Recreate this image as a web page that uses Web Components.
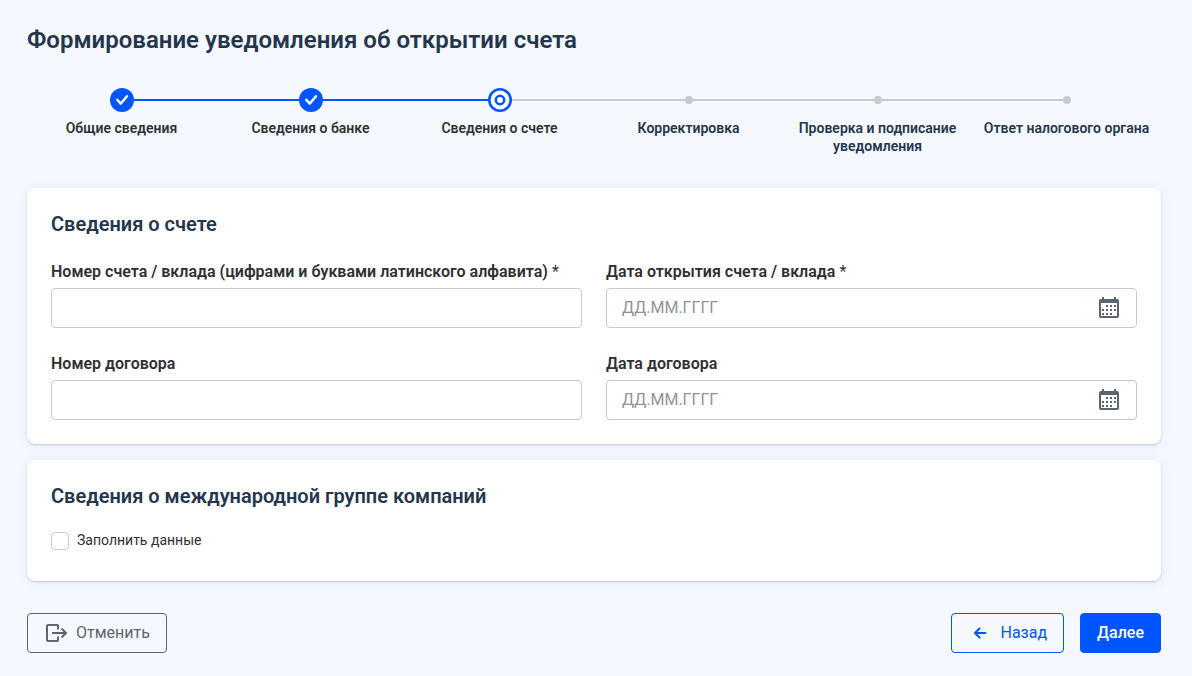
<!DOCTYPE html>
<html lang="ru">
<head>
<meta charset="utf-8">
<meta name="viewport" content="width=device-width, initial-scale=1">
<title>Формирование уведомления об открытии счета</title>
<style>
  body {
    margin: 0;
    background: #f5f8ff;
    color: #2f3033;
    font-family: Roboto, "Noto Sans", sans-serif;
    font-size: 16px;
    line-height: 24px;
    --blue: #0055ff;
    --navy: #25364b;
    --slate: #5f6270;
    --line: #c8c9cc;
  }
</style>
</head>
<body>
<notice-page>
  <step-list slot="steps">
    <step-item state="done">Общие сведения</step-item>
    <step-item state="done">Сведения о банке</step-item>
    <step-item state="current">Сведения о счете</step-item>
    <step-item>Корректировка</step-item>
    <step-item>Проверка и подписание уведомления</step-item>
    <step-item last>Ответ налогового органа</step-item>
  </step-list>
  <form-card heading="Сведения о счете">
    <field-grid>
      <text-field label="Номер счета / вклада (цифрами и буквами латинского алфавита)" required></text-field>
      <date-field label="Дата открытия счета / вклада" required></date-field>
      <text-field label="Номер договора"></text-field>
      <date-field label="Дата договора"></date-field>
    </field-grid>
  </form-card>
  <form-card heading="Сведения о международной группе компаний">
    <check-field>Заполнить данные</check-field>
  </form-card>
  <action-bar slot="actions">
    <action-button kind="cancel" icon="exit" slot="start">Отменить</action-button>
    <action-button kind="back" icon="arrow">Назад</action-button>
    <action-button kind="next">Далее</action-button>
  </action-bar>
</notice-page>

<script>
  const define = (name, render) => customElements.define(name, class extends HTMLElement {
    connectedCallback() {
      if (this.shadowRoot) return;
      const template = document.createElement('template');
      template.innerHTML = render(this);
      this.attachShadow({ mode: 'open' }).append(template.content.cloneNode(true));
    }
  });

  define('notice-page', () => `
    <style>
      :host { display: block; padding: 24px 31px 23px 27px; }
      h1 { margin: 0 0 32px; color: var(--navy); font-size: 24px; line-height: 32px; font-weight: 600; }
      .cards { display: grid; gap: 16px; margin: 32px 0; }
    </style>
    <main>
      <h1>Формирование уведомления об открытии счета</h1>
      <slot name="steps"></slot>
      <div class="cards"><slot></slot></div>
      <slot name="actions"></slot>
    </main>`);

  define('step-list', () => `
    <style>
      :host { display: grid; grid-auto-flow: column; grid-auto-columns: minmax(0, 1fr); }
    </style>
    <slot></slot>`);

  const marks = {
    done: `<svg width="24" height="24" viewBox="0 0 24 24" aria-hidden="true"><circle cx="12" cy="12" r="12" fill="#05f"/><path d="M7.200 11.800l3.500 3.800 6.300-7.400" fill="none" stroke="#fff" stroke-width="2.400" stroke-linecap="round" stroke-linejoin="round"/></svg>`,
    current: `<svg width="24" height="24" viewBox="0 0 24 24" aria-hidden="true"><circle cx="12" cy="12" r="10.700" fill="#fff" stroke="#05f" stroke-width="2.600"/><circle cx="12" cy="12" r="4.200" fill="#fff" stroke="#05f" stroke-width="2.500"/></svg>`,
    todo: `<svg width="8" height="8" viewBox="0 0 8 8" aria-hidden="true"><circle cx="4" cy="4" r="4" fill="#c8c9cc"/></svg>`
  };

  define('step-item', el => `
    <style>
      :host { display: block; text-align: center; font-size: 14px; line-height: 18px; font-weight: 600; }
      .track { display: grid; grid-template-columns: 1fr auto 1fr; align-items: center; height: 24px; margin-bottom: 7px; }
      .track::before, .track::after { content: ""; height: 2px; background: var(--line); }
      svg { display: block; }
      :host(:first-child) .track::before, :host([last]) .track::after { background: none; }
      :host([state]) .track::before, :host([state="done"]) .track::after { background: var(--blue); }
      :host([state]:first-child) .track::before { background: none; }
      :host(:not([state])) { color: var(--navy); }
      .label { padding: 0 8px 1px; min-height: 36px; }
    </style>
    <div class="track">${marks[el.getAttribute('state') || 'todo']}</div>
    <div class="label"><slot></slot></div>`);

  define('form-card', el => `
    <style>
      :host { display: block; padding: 24px; border-radius: 8px; background: #fff;
        box-shadow: 0 1px 2px rgba(34, 40, 60, .2), 0 2px 12px rgba(60, 90, 170, .08); }
      h2 { margin: 0 0 24px; color: var(--navy); font-size: 20px; line-height: 24px; font-weight: 600; }
    </style>
    <h2>${el.getAttribute('heading')}</h2>
    <slot></slot>`);

  define('field-grid', () => `
    <style>
      :host { display: grid; grid-template-columns: repeat(auto-fit, minmax(min(100%, 360px), 1fr)); gap: 24px; }
    </style>
    <slot></slot>`);

  const fieldStyle = `
    :host { display: block; }
    label { display: block; margin-bottom: 4px; font-weight: 600; line-height: 24px; }
    .mark { font-weight: 400; }
    .box { display: flex; align-items: center; box-sizing: border-box; height: 40px;
      border: 1px solid var(--line); border-radius: 4px; background: #fff; }
    .box:focus-within { border-color: var(--blue); }
    input { flex: 1; min-width: 0; height: 100%; box-sizing: border-box; margin: 0; padding: 0 15px 2px;
      border: 0; outline: 0; background: none; color: inherit; font: inherit; }
    input::placeholder { color: #8f929a; opacity: 1; }`;

  const fieldLabel = el =>
    `<label for="value">${el.getAttribute('label')}${el.hasAttribute('required') ? ' <span class="mark">*</span>' : ''}</label>`;

  define('text-field', el => `
    <style>${fieldStyle}</style>
    ${fieldLabel(el)}
    <div class="box"><input id="value" type="text"></div>`);

  define('date-field', el => `
    <style>${fieldStyle}
      button { display: block; margin: 0 15px 0 0; padding: 0; border: 0; background: none; color: var(--slate); cursor: pointer; }
      svg { display: block; }
    </style>
    ${fieldLabel(el)}
    <div class="box">
      <input id="value" type="text" placeholder="ДД.ММ.ГГГГ">
      <button type="button" aria-label="Открыть календарь">
        <svg width="24" height="24" viewBox="0 0 24 24" fill="currentColor" aria-hidden="true">
          <path fill-rule="evenodd" d="M5 1h2v2h10V1h2v2h1a2 2 0 0 1 2 2v15a2 2 0 0 1-2 2H4a2 2 0 0 1-2-2V5a2 2 0 0 1 2-2h1zM4 7v12.500q0 .5.5.5h15q.5 0 .5-.5V7z"/>
          <path d="M9 9h2v2H9zM13 9h2v2h-2zM17 9h2v2h-2zM5 13h2v2H5zM9 13h2v2H9zM13 13h2v2h-2zM17 13h2v2h-2zM5 17h2v2H5zM9 17h2v2H9zM13 17h2v2h-2z"/>
        </svg>
      </button>
    </div>`);

  define('check-field', () => `
    <style>
      :host { display: block; min-height: 25px; font-size: 14px; line-height: 16px; }
      label { display: inline-flex; gap: 8px; cursor: pointer; }
      input { appearance: none; box-sizing: border-box; width: 18px; height: 18px; margin: 0;
        border: 1px solid var(--line); border-radius: 4px; background: #fff; }
      input:checked { border-color: var(--blue); background: var(--blue); }
    </style>
    <label><input type="checkbox"><slot></slot></label>`);

  define('action-bar', () => `
    <style>
      :host { display: flex; flex-wrap: wrap; gap: 16px; }
      .start { margin-right: auto; }
    </style>
    <div class="start"><slot name="start"></slot></div>
    <slot></slot>`);

  const icons = {
    exit: `<svg width="24" height="24" viewBox="0 0 24 24" fill="none" stroke="currentColor" stroke-width="2" aria-hidden="true"><path d="M14 8.500V5q0-1-1-1H4Q3 4 3 5v14q0 1 1 1h9q1 0 1-1v-3.500"/><path d="M8 12h14M17.500 7.500L22 12l-4.500 4.500"/></svg>`,
    arrow: `<svg width="24" height="24" viewBox="0 0 24 24" fill="none" stroke="currentColor" stroke-width="2" stroke-linecap="round" stroke-linejoin="round" aria-hidden="true"><path d="M17.500 12H7M11.500 7.500L7 12l4.500 4.500"/></svg>`
  };

  define('action-button', el => `
    <style>
      :host { display: block; }
      button { display: flex; align-items: center; gap: 8px; box-sizing: border-box; height: 40px; margin: 0;
        padding: 0 16px; border: 1px solid currentColor; border-radius: 4px; background: none;
        color: var(--slate); font: inherit; line-height: 24px; cursor: pointer; }
      :host([kind="back"]) button { color: var(--blue); }
      :host([kind="next"]) button { border-color: var(--blue); background: var(--blue); color: #fff; font-weight: 500; }
      svg { display: block; }
    </style>
    <button type="button">${icons[el.getAttribute('icon')] || ''}<span><slot></slot></span></button>`);
</script>
</body>
</html>
